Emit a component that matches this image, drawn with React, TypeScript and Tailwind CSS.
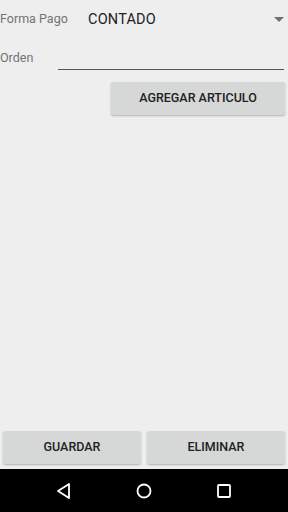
import React from "react";

export default function App() {
  const btn =
    "h-[33px] bg-[#d6d7d7] rounded-[2px] shadow-[0_1px_2px_rgba(0,0,0,0.25)] flex items-center justify-center text-[12.5px] text-[#212121] font-medium";
  return (
    <div className="w-[288px] h-[512px] flex flex-col bg-[#eeeeee] overflow-hidden" style={{ fontFamily: "Roboto, 'Liberation Sans', sans-serif" }}>
      <div className="flex-1 flex flex-col">
        <div className="h-[36px] pt-[3px] flex items-center">
          <div className="w-[88px] text-[12.5px] text-[#737373]">Forma Pago</div>
          <div className="flex-1 text-[14.5px] text-[#212121] tracking-[0.2px]">CONTADO</div>
          <svg width="10" height="6" viewBox="0 0 10 6" className="mr-[4px]">
            <path d="M0 0 L10 0 L5 5 Z" fill="#707070" />
          </svg>
        </div>
        <div className="h-[34px] flex items-center">
          <div className="w-[58px] text-[12.5px] text-[#737373] mt-[10px]">Orden</div>
          <div className="flex-1 mr-[4px] self-stretch border-b border-[#555555]" />
        </div>
        <div className="flex justify-end pr-[3px] mt-[12px]">
          <div className={"w-[174px] " + btn}>AGREGAR ARTICULO</div>
        </div>
      </div>
      <div className="flex gap-[6px] px-[3px] pb-[5px]">
        <div className={"flex-1 " + btn}>GUARDAR</div>
        <div className={"flex-1 " + btn}>ELIMINAR</div>
      </div>
      <div className="h-[43px] bg-black flex items-center justify-center gap-[60px]">
        <svg width="20" height="20" viewBox="0 0 20 20">
          <path d="M15 3 L15 17 L4 10 Z" fill="none" stroke="#fff" strokeWidth="1.8" strokeLinejoin="round" />
        </svg>
        <svg width="20" height="20" viewBox="0 0 20 20">
          <circle cx="10" cy="10" r="6.5" fill="none" stroke="#fff" strokeWidth="1.8" />
        </svg>
        <svg width="20" height="20" viewBox="0 0 20 20">
          <rect x="4" y="4" width="12" height="12" rx="1" fill="none" stroke="#fff" strokeWidth="1.8" />
        </svg>
      </div>
    </div>
  );
}
